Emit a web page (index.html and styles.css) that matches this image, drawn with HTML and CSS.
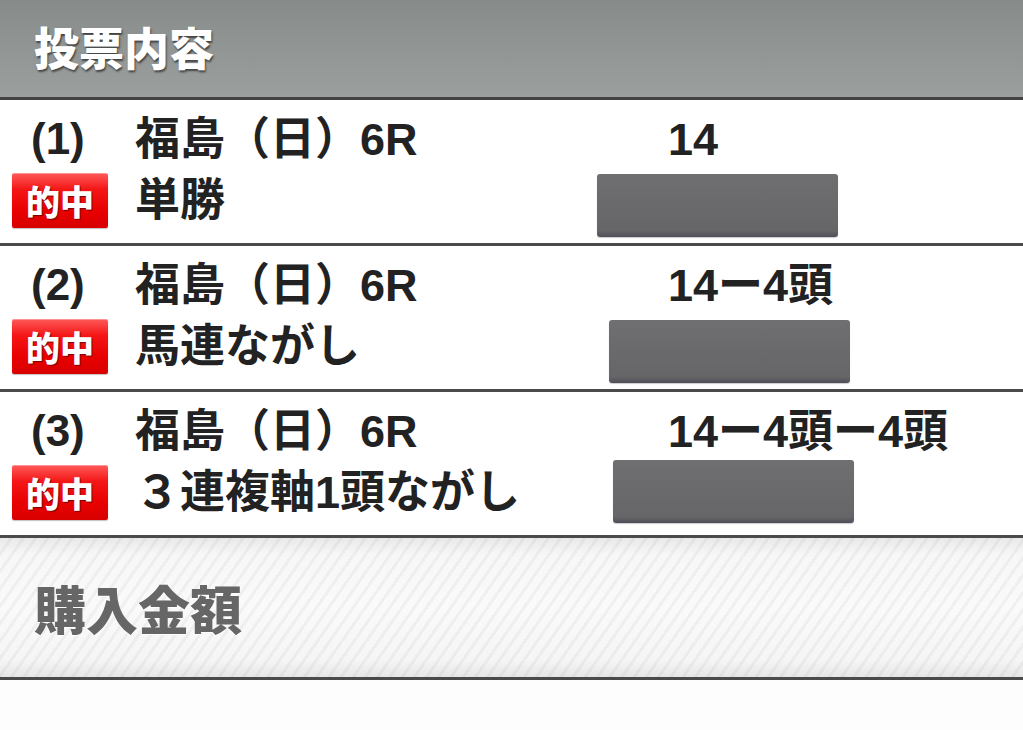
FILE: index.html
```html
<!DOCTYPE html>
<html lang="ja">
<head>
<meta charset="utf-8">
<title>投票内容</title>
<link rel="stylesheet" href="styles.css">
</head>
<body>
<div class="page">
  <header class="section-head">
    <h1 class="head-title">投票内容</h1>
  </header>

  <div class="bet-row">
    <div class="num">(1)</div>
    <div class="venue">福島（日）6R</div>
    <div class="combo">14</div>
    <div class="badge">的中</div>
    <div class="bet-type">単勝</div>
    <div class="amount-box"></div>
  </div>

  <div class="bet-row">
    <div class="num">(2)</div>
    <div class="venue">福島（日）6R</div>
    <div class="combo">14ー4頭</div>
    <div class="badge">的中</div>
    <div class="bet-type">馬連ながし</div>
    <div class="amount-box shift-mid"></div>
  </div>

  <div class="bet-row">
    <div class="num">(3)</div>
    <div class="venue">福島（日）6R</div>
    <div class="combo">14ー4頭ー4頭</div>
    <div class="badge">的中</div>
    <div class="bet-type">３連複軸1頭ながし</div>
    <div class="amount-box shift-far"></div>
  </div>

  <section class="sub-head">
    <h2 class="sub-title">購入金額</h2>
  </section>
</div>
</body>
</html>
```

FILE: styles.css
```css
* {
  box-sizing: border-box;
}

html, body {
  margin: 0;
  padding: 0;
  background: #fdfdfd;
}

body {
  font-family: "Liberation Sans", "Noto Sans CJK JP", sans-serif;
  font-weight: bold;
  color: #222;
}

.page {
  width: 1023px;
  height: 730px;
  overflow: hidden;
}

.section-head {
  height: 100px;
  background: linear-gradient(to bottom, #878b89 0%, #939795 60%, #9b9f9d 100%);
  border-bottom: 3px solid #434343;
  display: flex;
  align-items: center;
  padding-left: 34px;
}

.head-title {
  margin: 0;
  font-family: "Noto Sans CJK JP", sans-serif;
  font-weight: 900;
  font-size: 45px;
  line-height: 1;
  color: #fff;
  text-shadow: 1px 2px 2px rgba(0, 0, 0, 0.55);
  margin-top: -4px;
}

.bet-row {
  display: grid;
  grid-template-columns: 123px 462px 71px 1fr;
  grid-template-rows: 58px 64px;
  padding: 10px 0 11px 12px;
  height: 146px;
  border-bottom: 3px solid #4a4a4a;
  background: #fff;
}

.num {
  grid-column: 1;
  grid-row: 1;
  font-size: 44px;
  padding-left: 19px;
  align-self: center;
  line-height: 1;
}

.venue {
  grid-column: 2;
  grid-row: 1;
  font-size: 45px;
  align-self: center;
  line-height: 1;
  white-space: nowrap;
}

.combo {
  grid-column: 4;
  grid-row: 1;
  font-size: 45px;
  align-self: center;
  line-height: 1;
  white-space: nowrap;
}

.badge {
  grid-column: 1;
  grid-row: 2;
  align-self: center;
  width: 96px;
  height: 55px;
  border-radius: 2px;
  background: linear-gradient(to bottom, #ff5a5a 0%, #f41616 30%, #e80000 70%, #d80000 100%);
  box-shadow: 0 1px 1px rgba(0, 0, 0, 0.25), inset 0 1px 0 rgba(255, 255, 255, 0.35);
  color: #fff;
  font-family: "Noto Sans CJK JP", sans-serif;
  font-weight: 900;
  font-size: 34px;
  line-height: 55px;
  text-align: center;
  letter-spacing: 0;
  text-shadow: 1px 1px 1px rgba(90, 0, 0, 0.8);
}

.bet-type {
  grid-column: 2;
  grid-row: 2;
  align-self: center;
  font-size: 45px;
  line-height: 1;
  white-space: nowrap;
}

.amount-box {
  grid-column: 3 / span 2;
  grid-row: 2;
  align-self: start;
  margin-top: 6px;
  width: 241px;
  height: 63px;
  border-radius: 3px;
  background: linear-gradient(to bottom, #6f6f71 0%, #6a6a6c 50%, #666668 90%, #4e4e58 100%);
  box-shadow: 0 1px 1px rgba(0, 0, 0, 0.2);
}

.shift-mid {
  margin-left: 12px;
}

.shift-far {
  margin-left: 16px;
  margin-top: 0;
}

.sub-head {
  height: 142px;
  border-bottom: 3px solid #4a4a4a;
  display: flex;
  align-items: center;
  padding-left: 34px;
  background:
    repeating-linear-gradient(-55deg, rgba(0, 0, 0, 0) 0px, rgba(0, 0, 0, 0) 7px, rgba(0, 0, 0, 0.04) 7px, rgba(0, 0, 0, 0.04) 10px),
    linear-gradient(to bottom, #e9e9e9 0%, #f7f7f7 12%, #fafafa 50%, #f5f5f5 88%, #e6e6e6 100%);
}

.sub-title {
  margin: 0;
  font-family: "Noto Sans CJK JP", sans-serif;
  font-weight: 900;
  font-size: 52px;
  line-height: 1;
  color: #666;
  text-shadow: 0 1px 0 #fff;
}
```
